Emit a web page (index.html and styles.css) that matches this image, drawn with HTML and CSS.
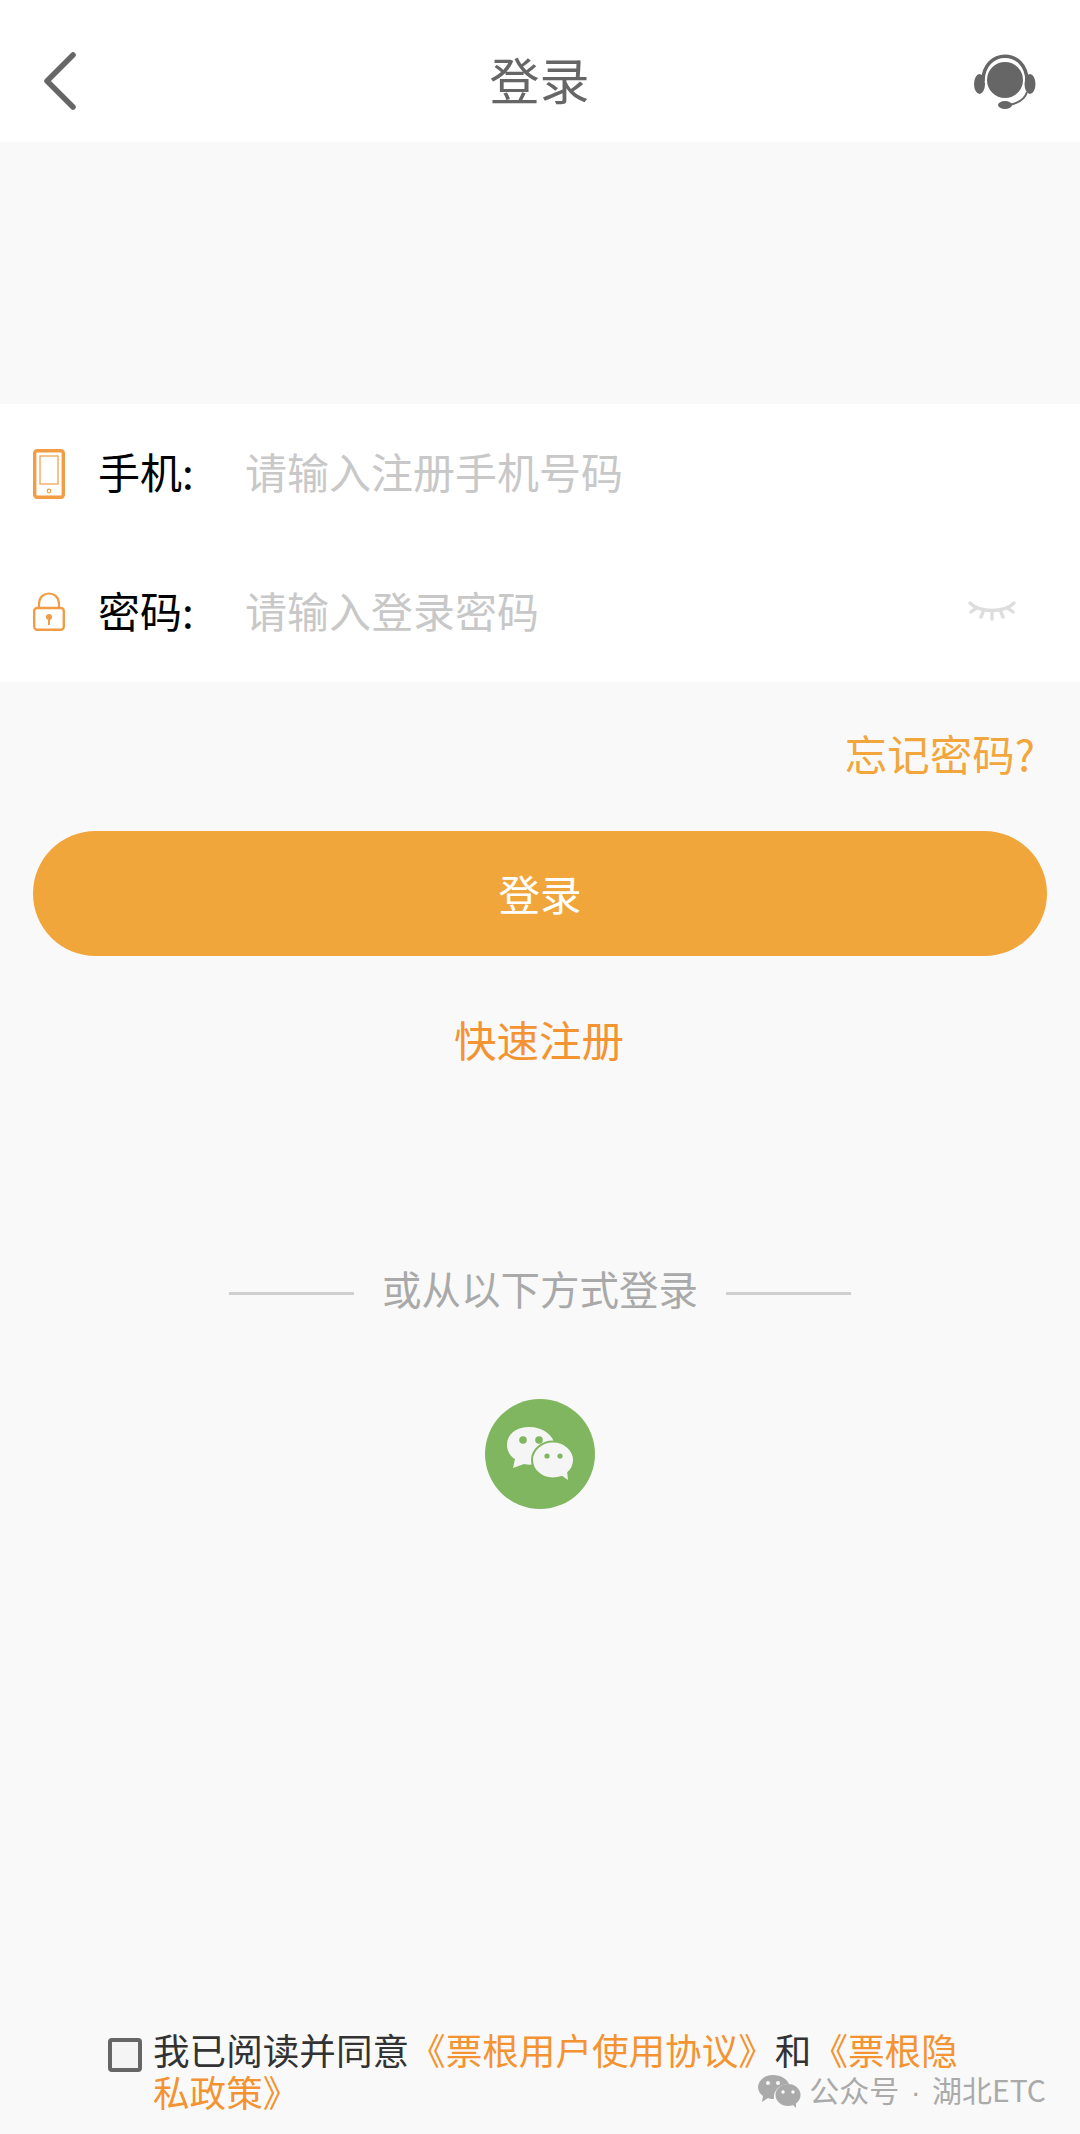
FILE: index.html
```html
<!DOCTYPE html>
<html>
	<head>
		<meta charset="UTF-8">
		<title>登录</title>
		<link rel="stylesheet" href="styles.css">
	</head>
	<body>
		<div class="page">
			<div class="header">
				<svg class="back" width="40" height="60" viewBox="0 0 40 60"><path d="M31 3 L5 29 L31 55" fill="none" stroke="#666" stroke-width="5.5" stroke-linecap="round" stroke-linejoin="round"/></svg>
				<div class="title">登录</div>
				<svg class="service" width="64" height="60" viewBox="0 0 64 60">
					<path d="M10 29 C10 -4 54 -4 54 29" fill="none" stroke="#666" stroke-width="3.5"/>
					<circle cx="32" cy="28" r="18" fill="#666"/>
					<ellipse cx="6.5" cy="32" rx="5.5" ry="10" fill="#666"/>
					<ellipse cx="57" cy="32" rx="5.5" ry="10" fill="#666"/>
					<path d="M54 40 C52 47 46 51 36 53" fill="none" stroke="#666" stroke-width="2"/>
					<ellipse cx="32" cy="53" rx="7" ry="4" fill="#666"/>
				</svg>
			</div>

			<div class="form">
				<div class="row">
					<svg class="row-icon" width="32" height="50" viewBox="0 0 32 50">
						<rect x="1.7" y="1.7" width="28.6" height="46.6" rx="2.5" fill="none" stroke="#f29d45" stroke-width="3.4"/>
						<rect x="7" y="7" width="18" height="28" fill="none" stroke="#f29d45" stroke-width="1.2"/>
						<circle cx="16" cy="42" r="1.8" fill="none" stroke="#f29d45" stroke-width="1.2"/>
					</svg>
					<span class="label">手机:</span>
					<span class="hint">请输入注册手机号码</span>
				</div>
				<div class="row">
					<svg class="row-icon lock" width="32" height="40" viewBox="0 0 32 40">
						<path d="M6 18 V13 C6 -1 26 -1 26 13 V18" fill="none" stroke="#f29d45" stroke-width="2.2"/>
						<rect x="1.2" y="17" width="29.6" height="21.8" rx="3" fill="none" stroke="#f29d45" stroke-width="2.4"/>
						<circle cx="16" cy="26" r="3" fill="#f29d45"/>
						<rect x="15" y="27" width="2" height="7" fill="#f29d45"/>
					</svg>
					<span class="label">密码:</span>
					<span class="hint">请输入登录密码</span>
					<svg class="eye" width="48" height="22" viewBox="0 0 48 22">
						<path d="M2 2 C12 12 36 12 46 2 M7 8 L3 11 M15 11 L13 16 M24 12 V18 M33 11 L35 16 M41 8 L45 11" fill="none" stroke="#ddd" stroke-width="3.4" stroke-linecap="round"/>
					</svg>
				</div>
			</div>

			<div class="forgot">忘记密码?</div>
			<div class="login-btn">登录</div>
			<div class="register">快速注册</div>

			<div class="other">
				<span class="line"></span>
				<span class="other-text">或从以下方式登录</span>
				<span class="line"></span>
			</div>

			<div class="wechat">
				<svg width="110" height="110" viewBox="0 0 110 110">
					<circle cx="55" cy="55" r="55" fill="#80b660"/>
					<path d="M44 28 C30 28 22 36 22 46 C22 53 26 58 30 60 L28 69 L39 65 C43 66 47 66 51 65 L70 46 C68 36 58 28 44 28 Z" fill="#f5f5f5"/>
					<ellipse cx="68" cy="61" rx="21" ry="18.5" fill="#f5f5f5" stroke="#80b660" stroke-width="2"/>
					<path d="M76 76 L83 81 L82 72 Z" fill="#f5f5f5"/>
					<circle cx="38" cy="41" r="3.8" fill="#80b660"/>
					<circle cx="54" cy="41" r="3.8" fill="#80b660"/>
					<circle cx="62" cy="57" r="2.6" fill="#80b660"/>
					<circle cx="75" cy="57" r="2.6" fill="#80b660"/>
				</svg>
			</div>

			<div class="agree">
				<span class="check"></span>
				<div class="agree-text">我已阅读并同意<span class="link">《票根用户使用协议》</span>和<span class="link">《票根隐私政策》</span></div>
			</div>

			<div class="mark">
				<svg width="44" height="34" viewBox="0 0 44 34">
					<path d="M16 1 C7 1 1 7 1 13 C1 17 3 20 6 22 L5 28 L11 24 C13 25 15 25 17 25 C16 17 22 10 32 10 C30 5 24 1 16 1 Z" fill="#aaa"/>
					<ellipse cx="31" cy="21" rx="12.5" ry="11" fill="#aaa"/>
					<path d="M35 30 L39 34 L39 27 Z" fill="#aaa"/>
					<circle cx="11" cy="9" r="2" fill="#fafafa"/>
					<circle cx="21" cy="9" r="2" fill="#fafafa"/>
					<circle cx="26" cy="18" r="1.7" fill="#fafafa"/>
					<circle cx="36" cy="18" r="1.7" fill="#fafafa"/>
				</svg>
				<span>公众号<span class="dot"> · </span>湖北ETC</span>
			</div>
		</div>
	</body>
</html>
```

FILE: styles.css
```css
*{
	margin: 0;
	padding: 0;
	box-sizing: border-box;
}
body{
	background: #f9f9f9;
	font-family: "Noto Sans CJK SC", "Liberation Sans", sans-serif;
}
.page{
	width: 1080px;
	height: 2134px;
	position: relative;
	overflow: hidden;
}
.header{
	height: 142px;
	background: #fff;
	padding: 52px 43px 0 42px;
	display: grid;
	grid-template-columns: 1fr auto 1fr;
	align-items: start;
}
.back{
	display: block;
}
.title{
	font-size: 50px;
	line-height: 53px;
	color: #666;
}
.service{
	display: block;
	justify-self: end;
}
.form{
	margin-top: 262px;
	background: #fff;
	height: 278px;
}
.row{
	height: 139px;
	padding-left: 33px;
	display: flex;
	align-items: center;
	position: relative;
}
.row-icon{
	display: block;
	flex: none;
}
.lock{
	margin-top: -2px;
	margin-bottom: 2px;
}
.label{
	margin-left: 33px;
	width: 147px;
	padding-bottom: 6px;
	font-size: 42px;
	color: #000;
}
.hint{
	padding-bottom: 6px;
	font-size: 42px;
	color: #c8c8c8;
}
.eye{
	position: absolute;
	right: 64px;
	top: 58px;
}
.forgot{
	margin-top: 41px;
	padding-right: 45px;
	text-align: right;
	font-size: 42.5px;
	line-height: 60px;
	color: #f2a63c;
}
.login-btn{
	margin: 48px 33px 0;
	height: 125px;
	border-radius: 63px;
	background: #f1a63c;
	color: #fff;
	font-size: 41.5px;
	line-height: 124px;
	text-align: center;
}
.register{
	margin-top: 53px;
	padding-right: 2px;
	text-align: center;
	font-size: 42.5px;
	line-height: 60px;
	color: #f39332;
}
.other{
	margin-top: 190px;
	display: flex;
	justify-content: center;
	align-items: center;
	gap: 28px;
	font-size: 39.5px;
	line-height: 58px;
	color: #a9a9a9;
}
.other-text{
	padding-bottom: 10px;
}
.line{
	width: 125px;
	height: 3px;
	background: #d0d0d0;
}
.wechat{
	margin-top: 72px;
	padding-right: 1px;
	display: flex;
	justify-content: center;
}
.wechat svg{
	display: block;
}
.agree{
	margin-top: 520px;
	padding-left: 108px;
	display: flex;
	align-items: flex-start;
}
.check{
	flex: none;
	width: 34px;
	height: 34px;
	margin-top: 9px;
	margin-right: 11px;
	border: 4px solid #666;
	border-radius: 4px;
	background: #f4f4f4;
}
.agree-text{
	width: 815px;
	font-size: 36.6px;
	line-height: 42px;
	color: #333;
}
.link{
	color: #f39332;
}
.mark{
	position: absolute;
	right: 34px;
	top: 2067px;
	display: flex;
	align-items: center;
	gap: 8px;
	font-size: 30px;
	line-height: 44px;
	color: #aaa;
}
.mark svg{
	display: block;
}
.dot{
	padding: 0 3px;
	font-family: "Liberation Sans", sans-serif;
}
```
